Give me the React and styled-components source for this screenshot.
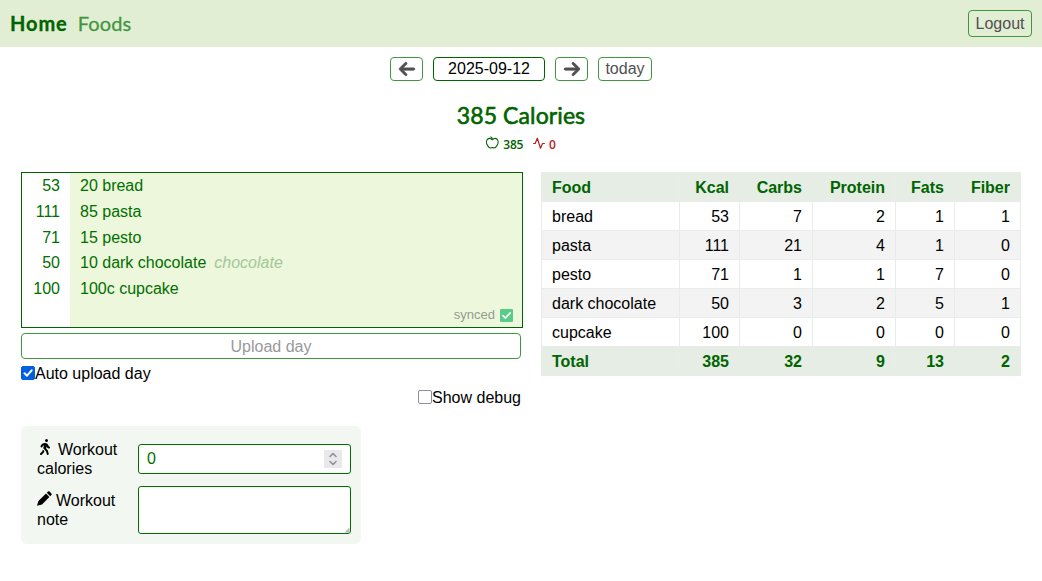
import React from 'react';
import styled, { createGlobalStyle, css } from 'styled-components';
import { FaArrowLeft, FaArrowRight, FaPersonWalking } from 'react-icons/fa6';

const Global = createGlobalStyle`
  * { box-sizing: border-box; }
  body { margin: 0; background: #fff; color: #000; font: 16px/18px "Liberation Sans", Arial, sans-serif; }
  button, input, textarea { font: inherit; margin: 0; }
`;

const Nav = styled.nav`
  height: 47px; padding: 0 10px; background: #e2eed3;
  display: flex; align-items: center; gap: 10px;
`;
const NavLink = styled.a`
  font: ${p => (p.$active ? 700 : 400)} 20px/24px Lato, sans-serif;
  margin-top: -1px;
  letter-spacing: ${p => (p.$active ? '0.9px' : '0.15px')};
  color: ${p => (p.$active ? '#006400' : '#429642')};
  -webkit-text-stroke: ${p => (p.$active ? '0.3px #006400' : '0.3px #429642')};
`;
const Button = styled.button`
  display: flex; align-items: center; justify-content: center;
  width: ${p => p.$w}px; height: ${p => p.$h || 24}px; padding: 0;
  border: 1px solid ${p => (p.$strong ? '#006400' : '#429642')}; border-radius: 4px;
  background: ${p => (p.$clear ? 'transparent' : '#fff')};
  color: ${p => p.$color || '#505050'};
  svg { stroke: currentColor; stroke-width: 22px; }
`;
const Logout = styled(Button)`margin-left: auto;`;
const DateBar = styled.div`
  display: flex; justify-content: center; gap: 10px; padding-top: 10px;
`;
const Title = styled.h1`
  margin: 20px 0 0; text-align: center; color: #006400;
  font: 400 23px/28px Lato, sans-serif; letter-spacing: 0.1px;
  -webkit-text-stroke: 0.6px #006400;
`;
const Stats = styled.div`
  display: flex; justify-content: center; gap: 10px; height: 18px; margin-top: 7px;
`;
const Stat = styled.span`
  display: flex; align-items: center; gap: 4px; color: ${p => p.$color};
  font: 600 12px/18px "Open Sans", sans-serif; letter-spacing: -0.25px;
  svg { margin-top: -4px; }
`;
const Main = styled.main`
  display: grid; grid-template-columns: 502px 480px; gap: 18px; align-items: start;
  padding: 18px 21px 0;
`;
const Editor = styled.div`
  position: relative; display: grid; grid-template-columns: 48px 1fr;
  height: 156px; border: 1px solid #006400; color: #006f00; line-height: 25.8px;
`;
const Gutter = styled.div`padding-right: 10px; text-align: right;`;
const Code = styled.div`padding-left: 10px; background: #edf7dc;`;
const Hint = styled.i`margin-left: 8px; color: #a4c899;`;
const Sync = styled.div`
  position: absolute; right: 9px; bottom: 3px; display: flex; align-items: center; gap: 5px;
  font-size: 13px; line-height: 18px; color: #969b8f;
`;
const Upload = styled(Button)`margin-top: 5px; padding-top: 2px;`;
const Check = styled.label`
  display: flex; align-items: center; width: 500px; height: 18px; margin-top: ${p => p.$top}px;
  justify-content: ${p => (p.$end ? 'flex-end' : 'flex-start')};
`;
const Box = styled.span`
  width: 14px; height: 14px; border-radius: 2px; display: flex; margin-top: -3px;
  border: 1px solid ${p => (p.$on ? '#0060df' : '#8f8f9d')};
  background: ${p => (p.$on ? '#0060df' : '#fff')};
`;
const Panel = styled.div`
  width: 340px; height: 118px; margin-top: 19px; padding: 13px 10px 10px 16px;
  background: #f2f7f2; border-radius: 6px;
  display: grid; grid-template-columns: 101px 213px; grid-template-rows: 39px 48px; row-gap: 8px;
`;
const Label = styled.label`
  line-height: 19px; padding-top: ${p => p.$top || 0}px;
  svg { margin-right: ${p => p.$gap}px; }
`;
const NumberField = styled.div`
  display: flex; align-items: center; justify-content: space-between;
  height: 30px; margin-top: 5px; padding: 0 8px;
  border: 1px solid #006f00; border-radius: 3px; background: #fff; color: #006f00;
`;
const Spinner = styled.span`
  display: flex; width: 18px; height: 18px; background: #e9e9ed;
`;
const Note = styled.textarea`
  display: block; width: 213px; height: 48px; resize: none;
  border: 1px solid #006f00; border-radius: 3px; background: #fff;
`;
const NoteWrap = styled.div`position: relative;`;
const Grip = styled.svg`position: absolute; right: 1px; bottom: 1px;`;
const Table = styled.table`
  width: 480px; table-layout: fixed; border-collapse: collapse;
`;
const Col = styled.col`width: ${p => p.$w}px;`;
const Row = styled.tr`
  height: 29px; background: ${p => (p.$head ? '#e5ede4' : p.$odd ? '#f3f3f3' : '#fff')};
  ${p => p.$head && css`color: #006400; font-weight: 700;`}
`;
const Cell = styled.td`
  padding: 2px 10px 0; border: 1px solid #e9ede9; text-align: right; white-space: nowrap;
  &:first-child { text-align: left; }
`;

const Tick = ({ size = 12 }) => (
  <svg width={size} height={size} viewBox="0 0 12 12" fill="none" stroke="#fff" strokeWidth="2" strokeLinecap="round" strokeLinejoin="round">
    <path d="M2.5 6.3 5 8.7 9.7 3.3" />
  </svg>
);

const entries = [
  ['53', '20 bread'], ['111', '85 pasta'], ['71', '15 pesto'],
  ['50', '10 dark chocolate', 'chocolate'], ['100', '100c cupcake'],
];
const rows = [
  ['Food', 'Kcal', 'Carbs', 'Protein', 'Fats', 'Fiber'],
  ['bread', 53, 7, 2, 1, 1],
  ['pasta', 111, 21, 4, 1, 0],
  ['pesto', 71, 1, 1, 7, 0],
  ['dark chocolate', 50, 3, 2, 5, 1],
  ['cupcake', 100, 0, 0, 0, 0],
  ['Total', 385, 32, 9, 13, 2],
];

export default function App() {
  return (
    <>
      <Global />
      <Nav>
        <NavLink $active>Home</NavLink>
        <NavLink>Foods</NavLink>
        <Logout $w={64} $h={27} $clear>Logout</Logout>
      </Nav>
      <DateBar>
        <Button $w={33}><FaArrowLeft size={18} /></Button>
        <Button $w={112} $strong $color="#000">2025-09-12</Button>
        <Button $w={33}><FaArrowRight size={18} /></Button>
        <Button $w={54}>today</Button>
      </DateBar>
      <Title>385 Calories</Title>
      <Stats>
        <Stat $color="#006400">
          <svg width="13" height="14" viewBox="0 0 13 14" fill="none" stroke="currentColor" strokeWidth="1.2" strokeLinecap="round" strokeLinejoin="round">
            <path d="M6.3 3.7C7.600 2.500 9.500 2 10.800 3c1.700 1.300 1.500 4.300.4 6.300-.7 1.300-1.700 2.700-3 2.700-.8 0-1-.4-1.900-.4s-1.100.4-1.900.4c-1.300 0-2.300-1.400-3-2.700C.3 7.300.1 4.300 1.800 3c1.300-1 3.200-.5 4.500.7Z" />
            <path d="M6.300 3.500C6.300 2 5.800 1.300 4.800 1" />
          </svg>
          385
        </Stat>
        <Stat $color="#b22222">
          <svg width="12" height="13" viewBox="0 0 12 13" fill="none" stroke="currentColor" strokeWidth="1.2" strokeLinecap="round" strokeLinejoin="round">
            <path d="M.6 6.500H2.200L4.300 1.200 7.500 11.200 9.500 6.500H11.400" />
          </svg>
          0
        </Stat>
      </Stats>
      <Main>
        <section>
          <Editor>
            <Gutter>{entries.map(([n]) => <div key={n}>{n}</div>)}</Gutter>
            <Code>
              {entries.map(([n, text, hint]) => <div key={n}>{text}{hint && <Hint>{hint}</Hint>}</div>)}
            </Code>
            <Sync>
              synced
              <svg width="13" height="13" viewBox="0 0 13 13">
                <rect width="13" height="13" rx="1" fill="#58cc89" />
                <path d="M3 6.700 5.400 9 10.200 3.800" fill="none" stroke="#fff" strokeWidth="1.700" strokeLinecap="round" />
              </svg>
            </Sync>
          </Editor>
          <Upload $w={500} $h={26} $color="#999">Upload day</Upload>
          <Check $top={6}><Box $on><Tick /></Box>Auto upload day</Check>
          <Check $top={6} $end><Box />Show debug</Check>
          <Panel>
            <Label $gap={5}><FaPersonWalking size={16} />Workout calories</Label>
            <NumberField>
              0
              <Spinner>
                <svg width="18" height="18" viewBox="0 0 18 18" fill="none" stroke="#909097" strokeWidth="1.600" strokeLinecap="round" strokeLinejoin="round">
                  <path d="M6 6.500 9 3.500 12 6.500M6 11.500 9 14.500 12 11.500" />
                </svg>
              </Spinner>
            </NumberField>
            <Label $gap={4} $top={5}>
              <svg width="15" height="15" viewBox="0 0 15 15" fill="currentColor">
                <path d="M9 2.600 12.400 6 5 13.400 1 14.600Q0 14.800.2 13.900L1.400 10.100ZM9.800 1.800 11 .6Q11.800-.1 12.600.6L14.400 2.400Q15.100 3.200 14.400 4L13.200 5.200Z" />
              </svg>
              Workout note
            </Label>
            <NoteWrap>
              <Note />
              <Grip width="6" height="6" viewBox="0 0 6 6"><path d="M5.500.5V5.500H.5Z" fill="#b5b5b8" /></Grip>
            </NoteWrap>
          </Panel>
        </section>
        <Table>
          <colgroup>{[138, 60, 73, 83, 59, 66].map((w, i) => <Col key={i} $w={w} />)}</colgroup>
          <tbody>
            {rows.map((r, i) => (
              <Row key={r[0]} $head={i === 0 || i === 6} $odd={i % 2 === 0}>
                {r.map((v, j) => <Cell key={j}>{v}</Cell>)}
              </Row>
            ))}
          </tbody>
        </Table>
      </Main>
    </>
  );
}
